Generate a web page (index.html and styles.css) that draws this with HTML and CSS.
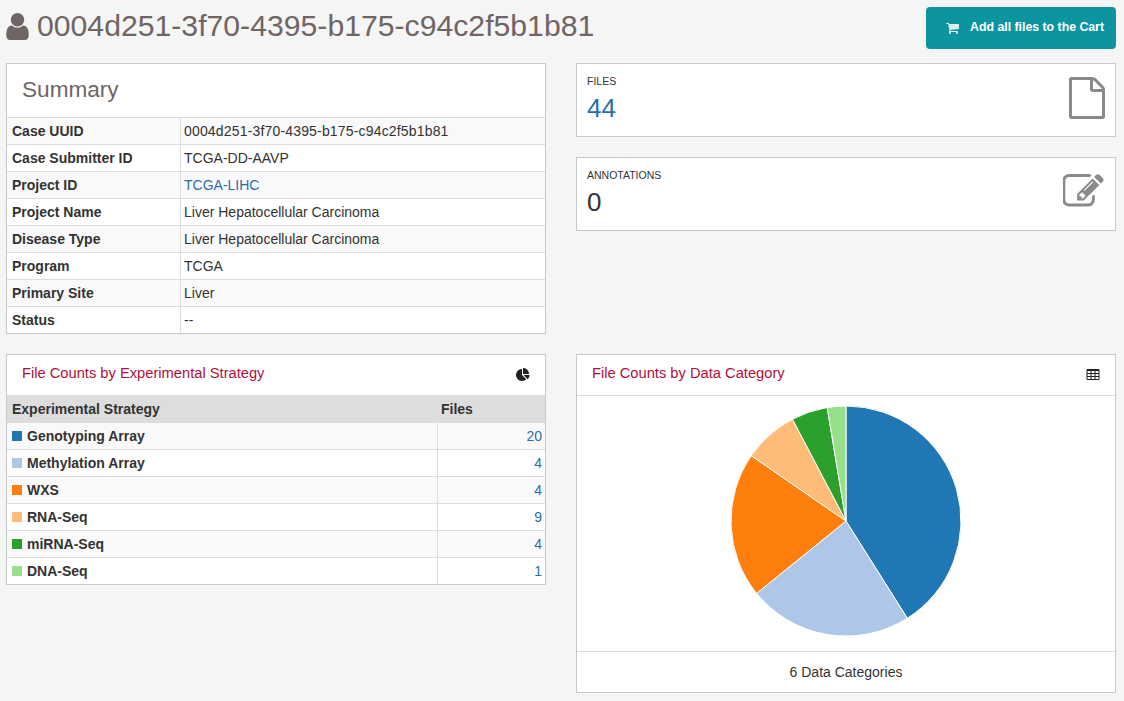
FILE: index.html
```html
<!DOCTYPE html>
<html lang="en">
<head>
    <meta charset="UTF-8">
    <meta name="viewport" content="width=device-width, initial-scale=1.0">
    <title>Case - 0004d251-3f70-4395-b175-c94c2f5b1b81</title>
    <link rel="stylesheet" href="styles.css">
</head>
<body>
    <div class="page-header">
        <h1 class="case-title">
            <svg class="user-icon" viewBox="256 128 1280 1536"><path d="M1536 1399q0 109-62.5 187t-150.5 78h-854q-88 0-150.5-78t-62.5-187q0-85 8.5-160.5t31.5-152 58.5-131 94-89 134.5-34.5q131 128 313 128t313-128q76 0 134.5 34.5t94 89 58.5 131 31.5 152 8.5 160.5zm-256-887q0 159-112.5 271.5t-271.5 112.5-271.5-112.5-112.5-271.5 112.5-271.5 271.5-112.5 271.5 112.5 112.5 271.5z"/></svg>
            <span>0004d251-3f70-4395-b175-c94c2f5b1b81</span>
        </h1>
        <button class="cart-button">
            <svg class="cart-icon" viewBox="64 128 1664 1536"><path d="M704 1536q0 52-38 90t-90 38-90-38-38-90 38-90 90-38 90 38 38 90zm896 0q0 52-38 90t-90 38-90-38-38-90 38-90 90-38 90 38 38 90zm128-1088v512q0 24-16.5 42.5t-40.5 21.5l-1044 122q13 60 13 70 0 16-24 64h920q26 0 45 19t19 45-19 45-45 19h-1024q-26 0-45-19t-19-45q0-11 8-31.5t16-36 21.5-40 15.5-29.5l-177-823h-204q-26 0-45-19t-19-45 19-45 45-19h256q16 0 28.5 6.5t19.5 15.5 13 24.5 8 26 5.5 29.5 4.5 26h1201q26 0 45 19t19 45z"/></svg>
            <span class="cart-label">Add all files to the Cart</span>
        </button>
    </div>

    <div class="layout">
        <div class="panel">
            <h2 class="summary-title">Summary</h2>
            <table class="info-table">
                <tr><th>Case UUID</th><td class="uuid">0004d251-3f70-4395-b175-c94c2f5b1b81</td></tr>
                <tr><th>Case Submitter ID</th><td>TCGA-DD-AAVP</td></tr>
                <tr><th>Project ID</th><td><a href="#">TCGA-LIHC</a></td></tr>
                <tr><th>Project Name</th><td>Liver Hepatocellular Carcinoma</td></tr>
                <tr><th>Disease Type</th><td>Liver Hepatocellular Carcinoma</td></tr>
                <tr><th>Program</th><td>TCGA</td></tr>
                <tr><th>Primary Site</th><td>Liver</td></tr>
                <tr><th>Status</th><td>--</td></tr>
            </table>
        </div>

        <div class="cards">
            <div class="card">
                <div>
                    <div class="card-label">FILES</div>
                    <a class="card-value" href="#">44</a>
                </div>
                <svg class="file-icon" viewBox="128 0 1536 1792"><path d="M1596 380q28 28 48 76t20 88v1152q0 40-28 68t-68 28h-1344q-40 0-68-28t-28-68v-1600q0-40 28-68t68-28h896q40 0 88 20t76 48zm-444-244v376h376q-10-29-22-41l-313-313q-12-12-41-22zm384 1528v-1024h-416q-40 0-68-28t-28-68v-416h-768v1536h1280z"/></svg>
            </div>
            <div class="card">
                <div>
                    <div class="card-label">ANNOTATIONS</div>
                    <div class="card-value">0</div>
                </div>
                <svg class="edit-icon" viewBox="128 128 1664 1472"><path d="M888 1184l116-116-152-152-116 116v56h96v96h56zm440-720q-16-16-33 1l-350 350q-17 17-1 33t33-1l350-350q17-17 1-33zm80 594v190q0 119-84.5 203.5t-203.5 84.5h-832q-119 0-203.5-84.5t-84.5-203.5v-832q0-119 84.5-203.5t203.5-84.5h832q63 0 117 25 15 7 18 23 3 17-9 29l-49 49q-14 14-32 8-23-6-45-6h-832q-66 0-113 47t-47 113v832q0 66 47 113t113 47h832q66 0 113-47t47-113v-126q0-13 9-22l64-64q15-15 35-7t20 29zm-96-738l288 288-672 672h-288v-288zm444 132l-92 92-288-288 92-92q28-28 68-28t68 28l152 152q28 28 28 68t-28 68z"/></svg>
            </div>
        </div>

        <div class="panel">
            <div class="count-head">
                <h3 class="count-title">File Counts by Experimental Strategy</h3>
                <svg class="small-icon" viewBox="0 0 1792 1792"><path d="M768 890l546 546q-106 108-247.5 168t-298.5 60q-209 0-385.5-103t-279.5-279.5-103-385.5 103-385.5 279.5-279.5 385.5-103v762zm187 2h773q0 157-60 298.5t-168 247.5zm709-128h-768v-768q209 0 385.5 103t279.5 279.5 103 385.5z"/></svg>
            </div>
            <table class="count-table">
                <thead>
                    <tr><th>Experimental Strategy</th><th class="files-col">Files</th></tr>
                </thead>
                <tbody>
                    <tr><td><span class="swatch swatch-blue"></span>Genotyping Array</td><td class="num"><a href="#">20</a></td></tr>
                    <tr><td><span class="swatch swatch-lightblue"></span>Methylation Array</td><td class="num"><a href="#">4</a></td></tr>
                    <tr><td><span class="swatch swatch-orange"></span>WXS</td><td class="num"><a href="#">4</a></td></tr>
                    <tr><td><span class="swatch swatch-peach"></span>RNA-Seq</td><td class="num"><a href="#">9</a></td></tr>
                    <tr><td><span class="swatch swatch-green"></span>miRNA-Seq</td><td class="num"><a href="#">4</a></td></tr>
                    <tr><td><span class="swatch swatch-lightgreen"></span>DNA-Seq</td><td class="num"><a href="#">1</a></td></tr>
                </tbody>
            </table>
        </div>

        <div class="panel">
            <div class="count-head head-line">
                <h3 class="count-title">File Counts by Data Category</h3>
                <svg class="small-icon" viewBox="0 0 1792 1792"><path d="M576 1376v-192q0-14-9-23t-23-9h-320q-14 0-23 9t-9 23v192q0 14 9 23t23 9h320q14 0 23-9t9-23zm0-384v-192q0-14-9-23t-23-9h-320q-14 0-23 9t-9 23v192q0 14 9 23t23 9h320q14 0 23-9t9-23zm512 384v-192q0-14-9-23t-23-9h-320q-14 0-23 9t-9 23v192q0 14 9 23t23 9h320q14 0 23-9t9-23zm-512-768v-192q0-14-9-23t-23-9h-320q-14 0-23 9t-9 23v192q0 14 9 23t23 9h320q14 0 23-9t9-23zm512 384v-192q0-14-9-23t-23-9h-320q-14 0-23 9t-9 23v192q0 14 9 23t23 9h320q14 0 23-9t9-23zm512 384v-192q0-14-9-23t-23-9h-320q-14 0-23 9t-9 23v192q0 14 9 23t23 9h320q14 0 23-9t9-23zm-512-768v-192q0-14-9-23t-23-9h-320q-14 0-23 9t-9 23v192q0 14 9 23t23 9h320q14 0 23-9t9-23zm512 384v-192q0-14-9-23t-23-9h-320q-14 0-23 9t-9 23v192q0 14 9 23t23 9h320q14 0 23-9t9-23zm0-384v-192q0-14-9-23t-23-9h-320q-14 0-23 9t-9 23v192q0 14 9 23t23 9h320q14 0 23-9t9-23zm128-320v1088q0 66-47 113t-113 47h-1344q-66 0-113-47t-47-113v-1088q0-66 47-113t113-47h1344q66 0 113 47t47 113z"/></svg>
            </div>
            <div class="chart-wrap">
                <svg class="pie" width="230" height="230" viewBox="0 0 230 230">
                    <path fill="#1f77b4" d="M115 115V0A115 115 0 0 1 176.3 212.3Z"/>
                    <path fill="#aec7e8" d="M115 115L176.3 212.3A115 115 0 0 1 25.6 187.4Z"/>
                    <path fill="#ff7f0e" d="M115 115L25.6 187.4A115 115 0 0 1 20.3 49.7Z"/>
                    <path fill="#ffbb78" d="M115 115L20.3 49.7A115 115 0 0 1 61.5 13.2Z"/>
                    <path fill="#2ca02c" d="M115 115L61.5 13.2A115 115 0 0 1 96.2 1.5Z"/>
                    <path fill="#98df8a" d="M115 115L96.2 1.5A115 115 0 0 1 115 0Z"/>
                </svg>
            </div>
            <div class="chart-foot">6 Data Categories</div>
        </div>
    </div>
</body>
</html>
```

FILE: styles.css
```css
body { margin: 0; padding: 0 8px 0 6px; background-color: #f5f5f5; color: #333; font-family: "Liberation Sans", Arial, sans-serif; font-size: 14px; }
a { color: #2a6ea8; text-decoration: none; }

.page-header { display: flex; justify-content: space-between; align-items: flex-start; height: 63px; }
.case-title { display: flex; align-items: center; gap: 8px; margin: 8px 0 0; font-size: 30.2px; font-weight: normal; line-height: 36px; color: #6f6564; }
.user-icon { width: 23px; height: 27px; margin-top: 1px; fill: #6f6564; }
.cart-button { display: flex; align-items: center; height: 42px; margin-top: 7px; padding: 0 12px 0 20px; border: none; border-radius: 4px; background-color: #0d959f; color: white; font-family: inherit; font-size: 12.3px; font-weight: bold; cursor: pointer; }
.cart-icon { width: 13px; height: 12px; margin-right: 11px; fill: #d8eef0; }
.cart-label { margin-bottom: 2px; }

.layout { display: grid; grid-template-columns: 540px 540px; column-gap: 30px; row-gap: 20px; align-items: start; }
.panel { background-color: white; border: 1px solid #c8c8c8; box-sizing: border-box; }
.summary-title { margin: 0; padding: 0 15px; height: 53px; line-height: 51px; font-size: 22.6px; font-weight: normal; color: #6f6564; }

.info-table { width: 100%; border-collapse: collapse; }
.info-table th, .info-table td { height: 26px; padding: 0 5px; border-top: 1px solid #ddd; text-align: left; line-height: 20px; }
.info-table th { width: 163px; border-right: 1px solid #ddd; font-weight: bold; }
.info-table td { padding-left: 3px; }
.info-table td.uuid { letter-spacing: 0.17px; }
.info-table tr:nth-child(odd) { background-color: #f9f9f9; }

.cards { display: flex; flex-direction: column; gap: 20px; }
.card { display: flex; justify-content: space-between; height: 74px; box-sizing: border-box; padding: 11px 10px 0; background-color: white; border: 1px solid #c8c8c8; }
.card-label { font-size: 10.5px; line-height: 13px; }
.card-value { display: block; margin-top: 5px; font-size: 26px; line-height: 30px; }
.file-icon { width: 36px; height: 42px; margin-top: 2px; fill: #8a8a8a; }
.edit-icon { width: 43px; height: 34px; margin-top: 5px; margin-right: -1px; fill: #8a8a8a; }

.count-head { display: flex; justify-content: space-between; align-items: center; height: 40px; padding: 0 15px; }
.head-line { border-bottom: 1px solid #ddd; }
.count-title { margin: 0 0 4px; font-size: 14.7px; font-weight: normal; color: #b0103a; }
.small-icon { width: 14px; height: 14px; fill: #222; }

.count-table { width: 100%; border-collapse: collapse; }
.count-table th { height: 27px; padding: 0 5px; background-color: #ddd; text-align: left; }
.count-table th.files-col { width: 99px; padding-left: 4px; }
.count-table td { height: 26px; padding: 0 5px; border-top: 1px solid #ddd; font-weight: bold; }
.count-table td.num { border-left: 1px solid #ddd; padding-right: 3px; text-align: right; font-weight: normal; }
.count-table tbody tr:nth-child(odd) { background-color: #f9f9f9; }
.swatch { display: inline-block; width: 10px; height: 10px; margin-right: 5px; }
.swatch-blue { background-color: #1f77b4; }
.swatch-lightblue { background-color: #aec7e8; }
.swatch-orange { background-color: #ff7f0e; }
.swatch-peach { background-color: #ffbb78; }
.swatch-green { background-color: #2ca02c; }
.swatch-lightgreen { background-color: #98df8a; }

.chart-wrap { display: flex; justify-content: center; padding: 10px 0 15px; height: 230px; }
.pie path { stroke: white; stroke-width: 1; }
.chart-foot { height: 40px; line-height: 40px; border-top: 1px solid #ddd; text-align: center; }
```
